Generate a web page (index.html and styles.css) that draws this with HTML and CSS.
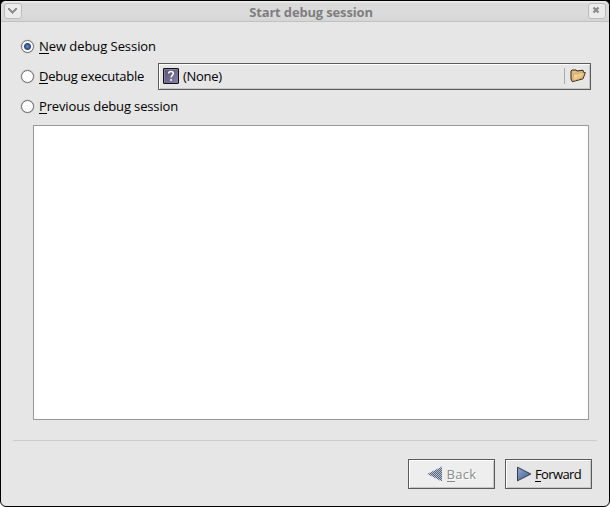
FILE: index.html
```
<!DOCTYPE html>
<html lang="en">
<head>
<meta charset="utf-8">
<title>Start debug session</title>
<link rel="stylesheet" href="styles.css">
</head>
<body>
<div class="window">
  <header class="titlebar">
    <button class="winbtn" aria-label="Menu"><svg width="15" height="14" shape-rendering="crispEdges"><path d="M3 4h2v1h1v1h1v1h1v-1h1v-1h1v-1h2v2h-1v1h-1v1h-1v1h-1v1h-1v-1h-1v-1h-1v-1h-1v-1h-1z" fill="#8d8d8d"/></svg></button>
    <h1>Start debug session</h1>
    <button class="winbtn" aria-label="Close"><svg width="15" height="14"><path d="M4.500 3.500l5 5M9.500 3.500l-5 5" stroke="#8a8a8a" stroke-width="2.300"/></svg></button>
  </header>
  <main>
    <label class="row"><span class="radio on"></span><span class="t-new"><u>N</u>ew debug Session</span></label>
    <div class="row">
      <label class="exec"><span class="radio"></span><span class="t-exec"><u>D</u>ebug executable</span></label>
      <button class="chooser">
        <svg width="16" height="17" viewBox="0 0 16 17"><defs><linearGradient id="q" x2="1" y2="1"><stop stop-color="#544f70"/><stop offset="1" stop-color="#8983ab"/></linearGradient></defs><rect x=".5" y=".5" width="15" height="15" rx=".5" fill="url(#q)" stroke="#111"/><path d="M1.500 14.500v-13h13" fill="none" stroke="#8580a0"/><path d="M5.700 5.500q0-2 2.300-2t2.300 2c0 1.700-2.200 1.800-2.200 4M8.100 11v2" fill="none" stroke="#fff" stroke-width="1.500"/></svg>
        <span class="t-none">(None)</span>
        <i class="divider"></i>
        <svg class="folder" width="16" height="14" viewBox="0 0 16 14"><defs><linearGradient id="f" x2="1" y2="1"><stop stop-color="#ffe6b6"/><stop offset="1" stop-color="#d9a75f"/></linearGradient></defs><path d="M1 2l1-1h4l1 1 6-.8.5 2.300h1.800L13 9.800 2.300 12.700 1 10z" fill="#e2bb7e" stroke="#2d261b"/><path d="M3.700 5.300l5-.6 1-1h4.800L12.600 9.200 2.600 12z" fill="url(#f)" stroke="#a47b43" stroke-width=".4"/></svg>
      </button>
    </div>
    <label class="row"><span class="radio"></span><span class="t-prev"><u>P</u>revious debug session</span></label>
    <div class="list"></div>
    <div class="rule"></div>
    <footer>
      <button class="nav disabled">
        <svg width="17" height="16" viewBox="0 0 17 16"><defs><pattern id="d" width="2" height="2" patternUnits="userSpaceOnUse"><path d="M0 0h1v1H0zM1 1h1v1H1z" fill="#56637e" shape-rendering="crispEdges"/></pattern></defs><path d="M1 8L15 1v14z" fill="#b9c0ce"/><path d="M0 8L15 .5v15z" fill="url(#d)"/></svg>
        <span class="t-back"><u>B</u>ack</span>
      </button>
      <button class="nav">
        <svg width="17" height="16" viewBox="0 0 17 16"><defs><linearGradient id="a" x2="1" y2="1"><stop stop-color="#91a7cf"/><stop offset="1" stop-color="#415b92"/></linearGradient></defs><path d="M1.500 1.200L14.800 8 1.500 14.800z" fill="url(#a)" stroke="#343b49"/></svg>
        <span class="t-fwd"><u>F</u>orward</span>
      </button>
    </footer>
  </main>
</div>
</body>
</html>
```
FILE: styles.css
```
* { box-sizing: border-box; }
html { background: linear-gradient(#000 0 50%, #fff 50%); }
body { margin: 0; height: 507px; font: 13px/16px "Open Sans", "Noto Sans", sans-serif; color: #000; overflow: hidden; }
button { font: inherit; color: inherit; margin: 0; padding: 0; }
svg { display: block; flex: none; }
.window { width: 610px; height: 507px; border: 1px solid #000; border-radius: 6px; background: #e6e6e6; overflow: hidden; display: flex; flex-direction: column; }
.titlebar { height: 21px; flex: none; display: flex; justify-content: space-between; align-items: center; padding: 0 3px 1px; background: linear-gradient(#f1edf1 0, #d8d8d8 3px, #dcdcdc 12px, #d5d5d5 20px); border-bottom: 1px solid #c1c1c1; }
.winbtn { width: 18px; height: 16px; border: 1px solid #bcbcbc; border-radius: 3px; background: #ebebeb; }
h1 { margin: 3px 0 0 12px; font-size: 13px; line-height: 16px; letter-spacing: -.16px; color: #7e7e7e; white-space: nowrap; }
main { padding: 9px 17px 0 20px; display: flex; flex-direction: column; }
.row { height: 30px; display: flex; align-items: center; white-space: nowrap; }
.exec { display: flex; align-items: center; width: 137px; flex: none; }
.radio { width: 13px; height: 13px; flex: none; margin-right: 5px; border: 1px solid #6d6d6d; border-radius: 50%; background: #fff; box-shadow: 0 0 0 .5px #c5c5c5; }
.on { background: radial-gradient(circle at 5.500px 5.500px, #6f8fce 0, #28467f 3px, #fff 4px); }
.t-new { letter-spacing: -.06px; }
.t-exec { letter-spacing: -.25px; }
.t-prev { letter-spacing: -.14px; }
.t-none { margin-left: 4px; letter-spacing: -.3px; }
.t-back { letter-spacing: .3px; }
.t-fwd { letter-spacing: -.6px; }
u { text-decoration: none; box-shadow: 0 -1px 0 #000 inset; display: inline-block; height: 16px; line-height: 16px; }
.chooser { width: 433px; height: 27px; flex: none; display: flex; align-items: center; padding: 0 4px; border: 1px solid #5b5b5b; background: #e6e6e6; box-shadow: inset 1px 1px #fff, inset -1px -1px #c6c6c6; }
.divider { width: 1px; height: 16px; background: #aaa; margin-left: auto; }
.folder { margin-left: 5px; }
.list { width: 556px; height: 295px; margin: 4px 0 0 12px; border: 1px solid #999; background: #fff; }
.rule { height: 1px; margin: 20px -5px 0 -8px; background: #ccc; }
footer { display: flex; justify-content: flex-end; gap: 10px; margin-top: 18px; }
.nav { width: 87px; height: 30px; display: flex; align-items: center; justify-content: center; gap: 2px; padding-bottom: 1px; border: 1px solid #5b5b5b; background: #e6e6e6; box-shadow: inset 1px 1px #fff, inset -1px -1px #c6c6c6; }
.disabled { color: #8b8b8b; background: #eee; gap: 3px; text-shadow: 1px 1px #fff; }
.disabled u { box-shadow: 0 -1px 0 #8b8b8b inset; }
```
